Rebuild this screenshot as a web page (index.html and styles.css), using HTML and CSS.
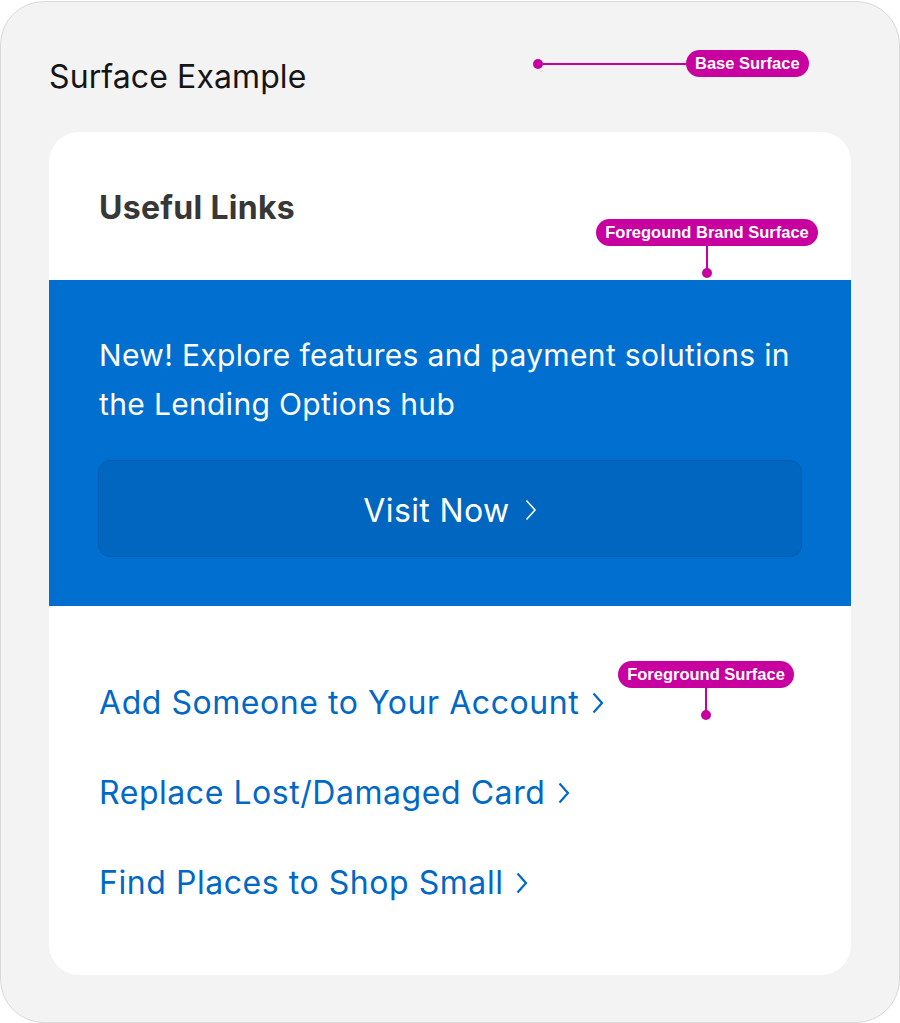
FILE: index.html
```html
<!DOCTYPE html>
<html lang="en">
<head>
<meta charset="utf-8">
<title>Surface Example</title>
<link rel="stylesheet" href="styles.css">
</head>
<body>
<div class="frame">
  <header class="frame-header">
    <h1 class="title">Surface Example</h1>
  </header>
  <section class="card">
    <h2 class="card-title">Useful Links</h2>
    <div class="brand">
      <p class="brand-text">New! Explore features and payment solutions in the Lending Options hub</p>
      <a class="brand-button" href="#">Visit Now
        <svg class="chev chev-btn" width="12" height="22" viewBox="0 0 12 22"><polyline points="1.5,1.5 10,11 1.5,20.5" fill="none" stroke="currentColor" stroke-width="1.6"/></svg>
      </a>
    </div>
    <ul class="links">
      <li><a class="link" href="#">Add Someone to Your Account<svg class="chev" width="12" height="22" viewBox="0 0 12 22"><polyline points="1.5,1.5 10,11 1.5,20.5" fill="none" stroke="currentColor" stroke-width="2.2"/></svg></a></li>
      <li><a class="link" href="#">Replace Lost/Damaged Card<svg class="chev" width="12" height="22" viewBox="0 0 12 22"><polyline points="1.5,1.5 10,11 1.5,20.5" fill="none" stroke="currentColor" stroke-width="2.2"/></svg></a></li>
      <li><a class="link" href="#">Find Places to Shop Small<svg class="chev" width="12" height="22" viewBox="0 0 12 22"><polyline points="1.5,1.5 10,11 1.5,20.5" fill="none" stroke="currentColor" stroke-width="2.2"/></svg></a></li>
    </ul>
  </section>

  <div class="note note-base">
    <span class="dot"></span><span class="hline"></span><span class="pill">Base Surface</span>
  </div>
  <div class="note note-brand">
    <span class="pill">Foregound Brand Surface</span><span class="vline"></span><span class="dot"></span>
  </div>
  <div class="note note-fg">
    <span class="pill">Foreground Surface</span><span class="vline"></span><span class="dot"></span>
  </div>
</div>
</body>
</html>
```

FILE: styles.css
```css
* { box-sizing: border-box; }

html, body {
  margin: 0;
  padding: 0;
  background: #ffffff;
}

body {
  font-family: Inter, "Liberation Sans", Arial, sans-serif;
}

.frame {
  position: relative;
  width: 900px;
  height: 1022px;
  margin-top: 1px;
  background: #f3f3f3;
  border: 1px solid #d9d9d9;
  border-radius: 44px;
  padding: 0 48px 46px 48px;
}

.frame-header {
  height: 130px;
  padding-top: 56px;
}

.title {
  margin: 0;
  font-size: 32px;
  line-height: 38px;
  font-weight: 400;
  color: #151515;
  letter-spacing: 0.1px;
}

.card {
  background: #ffffff;
  border-radius: 30px;
  height: 843px;
  overflow: hidden;
}

.card-title {
  margin: 0;
  padding: 58px 50px 54px 50px;
  font-size: 32px;
  line-height: 36px;
  font-weight: 700;
  color: #373737;
  letter-spacing: 0.3px;
}

.brand {
  background: #006fcf;
  padding: 51px 49px 49px 49px;
}

.brand-text {
  margin: 0;
  color: #ffffff;
  font-size: 30px;
  line-height: 49px;
  font-weight: 400;
  letter-spacing: 0.35px;
  padding-left: 1px;
}

.brand-button {
  margin-top: 31px;
  height: 97px;
  display: flex;
  align-items: center;
  justify-content: center;
  gap: 15px;
  background: #0066bf;
  border: 1px solid #005db2;
  border-radius: 12px;
  color: #ffffff;
  text-decoration: none;
  font-size: 32px;
  letter-spacing: 0.4px;
  font-weight: 400;
  padding-top: 3px;
}

.chev {
  display: inline-block;
  flex: none;
}

.chev-btn {
  margin-top: 0;
}

.links {
  list-style: none;
  margin: 0;
  padding: 79px 50px 0 50px;
  display: flex;
  flex-direction: column;
  gap: 54px;
}

.link {
  display: inline-flex;
  align-items: center;
  gap: 13px;
  font-size: 32px;
  line-height: 36px;
  letter-spacing: 0.55px;
  color: #0068c6;
  text-decoration: none;
}

/* annotations */
.note {
  position: absolute;
  display: flex;
  align-items: center;
}

.pill {
  background: #c900a0;
  color: #ffffff;
  font-family: "Liberation Sans", Arial, sans-serif;
  font-weight: 700;
  font-size: 16.5px;
  line-height: 27px;
  height: 27px;
  padding: 0 9px;
  border-radius: 14px;
  white-space: nowrap;
}

.dot {
  width: 10px;
  height: 10px;
  border-radius: 50%;
  background: #c900a0;
  flex: none;
}

.hline {
  height: 2px;
  width: 143px;
  background: #c900a0;
}

.vline {
  width: 2px;
  height: 26px;
  background: #c900a0;
}

.note-base {
  left: 532px;
  top: 48px;
}

.note-brand,
.note-fg {
  flex-direction: column;
}

.note-brand {
  left: 593px;
  top: 217px;
  width: 226px;
}

.note-fg {
  left: 616px;
  top: 659px;
  width: 178px;
}

.note-brand .dot,
.note-fg .dot {
  margin-top: -4px;
}
```
